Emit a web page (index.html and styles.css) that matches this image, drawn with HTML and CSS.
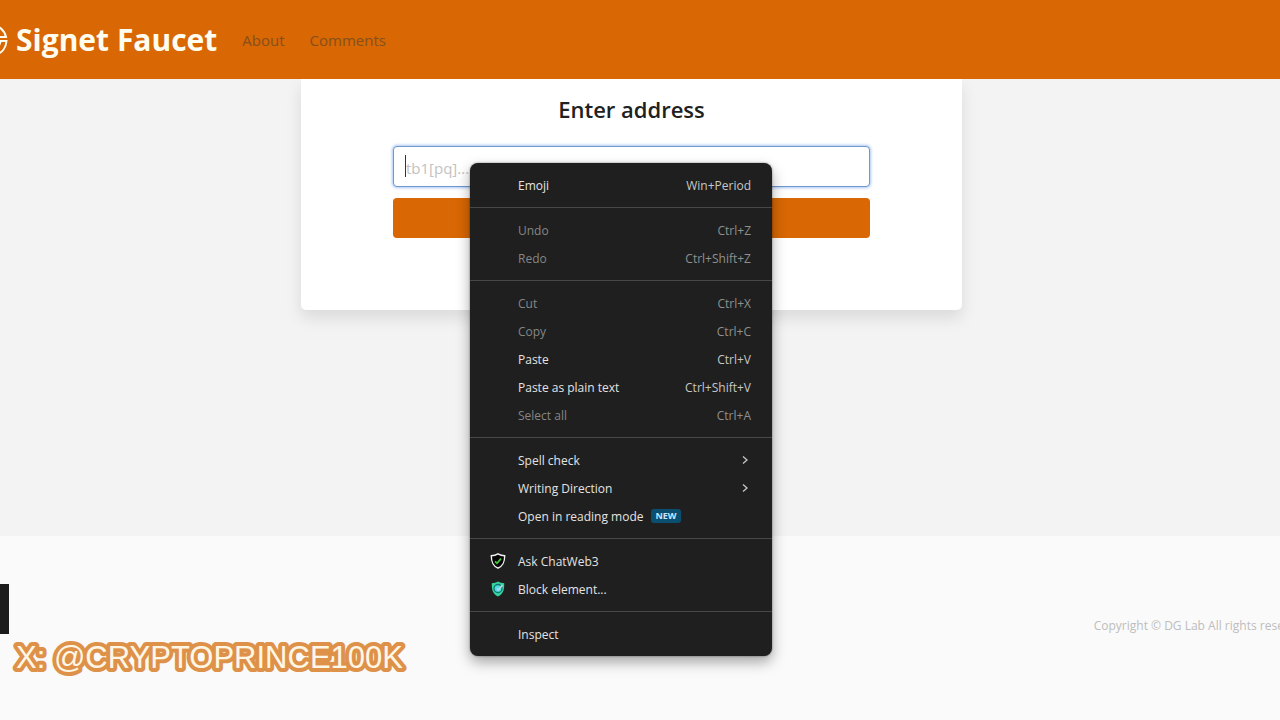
FILE: index.html
```html
<!DOCTYPE html>
<html lang="en">
<head>
    <meta charset="UTF-8">
    <meta name="viewport" content="width=device-width, initial-scale=1.0">
    <title>Signet Faucet</title>
    <link rel="stylesheet" href="styles.css">
</head>
<body>
    <header class="navbar">
        <a class="brand" href="#">
            <svg class="brand-logo" viewBox="0 0 36 36" fill="none" stroke="currentColor">
                <path d="M26 4.500A16 16 0 0 1 34 15H12" stroke-width="2"/>
                <path d="M20 8.500Q25 10 27 15" stroke-width="2"/>
                <path d="M12 19H34.500A16 16 0 0 1 24 33" stroke-width="2"/>
                <path d="M28.500 19Q28 25 21 29" stroke-width="2"/>
            </svg>
            <span>Signet Faucet</span>
        </a>
        <nav class="links">
            <a href="#about">About</a>
            <a href="#comments">Comments</a>
        </nav>
    </header>

    <main>
        <form class="card">
            <h1><label for="address">Enter address</label></h1>
            <div class="field">
                <input class="address" id="address" type="text" placeholder="tb1[pq]..." autocomplete="off">
                <span class="caret"></span>
            </div>
            <button class="submit" type="button" aria-label="Submit"></button>
        </form>
    </main>

    <footer>
        <div class="footer-block"></div>
        <p>Copyright © DG Lab All rights reserved.</p>
    </footer>

    <div class="menu" role="menu">
        <div class="group">
            <button type="button" class="item"><span>Emoji</span><kbd>Win+Period</kbd></button>
        </div>
        <div class="group">
            <button type="button" class="item" disabled><span>Undo</span><kbd>Ctrl+Z</kbd></button>
            <button type="button" class="item" disabled><span>Redo</span><kbd>Ctrl+Shift+Z</kbd></button>
        </div>
        <div class="group">
            <button type="button" class="item" disabled><span>Cut</span><kbd>Ctrl+X</kbd></button>
            <button type="button" class="item" disabled><span>Copy</span><kbd>Ctrl+C</kbd></button>
            <button type="button" class="item"><span>Paste</span><kbd>Ctrl+V</kbd></button>
            <button type="button" class="item"><span>Paste as plain text</span><kbd>Ctrl+Shift+V</kbd></button>
            <button type="button" class="item" disabled><span>Select all</span><kbd>Ctrl+A</kbd></button>
        </div>
        <div class="group">
            <button type="button" class="item"><span>Spell check</span>
                <svg class="arrow" viewBox="0 0 12 12"><path d="M4 2.500l4 3.500-4 3.500"/></svg>
            </button>
            <button type="button" class="item"><span>Writing Direction</span>
                <svg class="arrow" viewBox="0 0 12 12"><path d="M4 2.500l4 3.500-4 3.500"/></svg>
            </button>
            <button type="button" class="item"><span>Open in reading mode</span><span class="new">NEW</span></button>
        </div>
        <div class="group">
            <button type="button" class="item">
                <svg class="icon" viewBox="0 0 16 16">
                    <path d="M8 .8C6 2 3.800 2.600 1.300 2.700c0 6 1.200 9.800 6.700 12.500 5.500-2.700 6.700-6.500 6.700-12.500C12.200 2.600 10 2 8 .8z" fill="#050505" stroke="#f2f2f2" stroke-width="1.400"/>
                    <path d="M5 8.300l2 2 4-4.600" fill="none" stroke="#45c83c" stroke-width="1.800"/>
                </svg>
                <span>Ask ChatWeb3</span>
            </button>
            <button type="button" class="item">
                <svg class="icon" viewBox="0 0 16 16">
                    <path d="M8 .5C6 1.500 4 2 1.800 2.200c-.2 6.300.8 10.500 6.200 13.300 5.400-2.800 6.400-7 6.200-13.300C12 2 10 1.500 8 .5z" fill="#35d39a"/>
                    <circle cx="8" cy="7.500" r="4" fill="#54d9e4" stroke="#0b7774" stroke-width="1.300"/>
                    <path d="M7 7.500l1.500 1.500L12.500 4" fill="none" stroke="#b9d8dc" stroke-width="1.500"/>
                </svg>
                <span>Block element...</span>
            </button>
        </div>
        <div class="group">
            <button type="button" class="item"><span>Inspect</span></button>
        </div>
    </div>

    <svg class="handle" width="410" height="48">
        <text x="16" y="32">X: @CRYPTOPRINCE100K</text>
    </svg>
</body>
</html>
```
FILE: styles.css
```css
* {
    box-sizing: border-box;
}
body {
    margin: 0;
    min-height: 100vh;
    display: flex;
    flex-direction: column;
    overflow: hidden;
    background: #f3f3f3;
    font-family: "Open Sans", "Noto Sans", sans-serif;
    color: #212121;
}
.navbar {
    position: relative;
    z-index: 1;
    display: flex;
    align-items: center;
    gap: 25px;
    height: 79px;
    background: #d86704;
}
.brand {
    display: flex;
    align-items: center;
    gap: 8px;
    margin-left: -28px;
    color: #fffdf0;
    font-size: 30px;
    font-weight: bold;
    text-decoration: none;
    white-space: nowrap;
}
.brand-logo {
    width: 36px;
    height: 36px;
}
.links {
    display: flex;
    gap: 25px;
}
.links a {
    color: #85501c;
    font-size: 15px;
    text-decoration: none;
}
main {
    flex: 1;
    padding-right: 17px;
}
.card {
    display: flex;
    flex-direction: column;
    max-width: 661px;
    margin: 0 auto;
    padding: 12px 92px 72px;
    background: #fff;
    border-radius: 0 0 5px 5px;
    box-shadow: 0 8px 16px rgba(0, 0, 0, 0.1);
}
h1 {
    margin: 0 0 19px;
    font-size: 22px;
    line-height: 36px;
    font-weight: 600;
    text-align: center;
}
.field {
    position: relative;
}
.address {
    display: block;
    width: 100%;
    height: 41px;
    padding: 2px 12px 0;
    border: 1px solid #6f98cf;
    border-radius: 4px;
    box-shadow: 0 0 3px 1px #a9c7f2;
    outline: none;
    background: #fff;
    font: inherit;
    font-size: 15px;
}
.address::placeholder {
    color: #c2c2c2;
}
.caret {
    position: absolute;
    left: 12px;
    top: 9px;
    width: 1px;
    height: 22px;
    background: #333;
}
.submit {
    height: 40px;
    margin-top: 11px;
    border: none;
    border-radius: 4px;
    background: #d86704;
}
footer {
    display: flex;
    justify-content: space-between;
    align-items: flex-start;
    height: 184px;
    padding-top: 48px;
    background: #fafafa;
}
.footer-block {
    width: 9px;
    height: 50px;
    background: #1c1c1c;
}
footer p {
    margin: 32px -32px 0 0;
    color: #bdbdbd;
    font-size: 12px;
    line-height: 20px;
    white-space: nowrap;
}

/* context menu */
.menu {
    position: absolute;
    z-index: 2;
    left: 470px;
    top: 163px;
    width: 302px;
    background: #1f1f1f;
    border-radius: 8px;
    box-shadow: 0 6px 14px rgba(0, 0, 0, 0.35), 0 0 2px rgba(0, 0, 0, 0.5);
}
.group {
    padding: 8px 0;
}
.group + .group {
    border-top: 1px solid #484848;
}
.item {
    display: grid;
    grid-template-columns: 16px auto 1fr;
    align-items: center;
    column-gap: 12px;
    width: 100%;
    height: 28px;
    padding: 0 21px 0 20px;
    border: none;
    background: none;
    color: #e3e3e3;
    font: inherit;
    font-size: 12px;
    text-align: left;
    white-space: nowrap;
}
.item > span:first-of-type {
    grid-column: 2;
}
.item:disabled {
    color: #868686;
}
.item kbd {
    font: inherit;
    color: #c7c7c7;
    text-align: right;
}
.item:disabled kbd {
    color: #8f8f8f;
}
.arrow {
    justify-self: end;
    width: 12px;
    height: 12px;
    fill: none;
    stroke: #c7c7c7;
    stroke-width: 1.3;
}
.icon {
    width: 16px;
    height: 16px;
}
.new {
    justify-self: start;
    margin-left: -4px;
    padding: 0 4px;
    border-radius: 3px;
    background: #0b4f70;
    color: #c2e7ff;
    font-size: 9px;
    line-height: 14px;
    font-weight: bold;
}

/* channel handle over the page */
.handle {
    position: absolute;
    z-index: 3;
    left: 0;
    top: 636px;
    fill: #fff7e6;
    font-family: "Liberation Sans", Arial, sans-serif;
    font-size: 31px;
    stroke: #de9148;
    stroke-width: 8px;
    stroke-linejoin: round;
    paint-order: stroke fill;
}
```
